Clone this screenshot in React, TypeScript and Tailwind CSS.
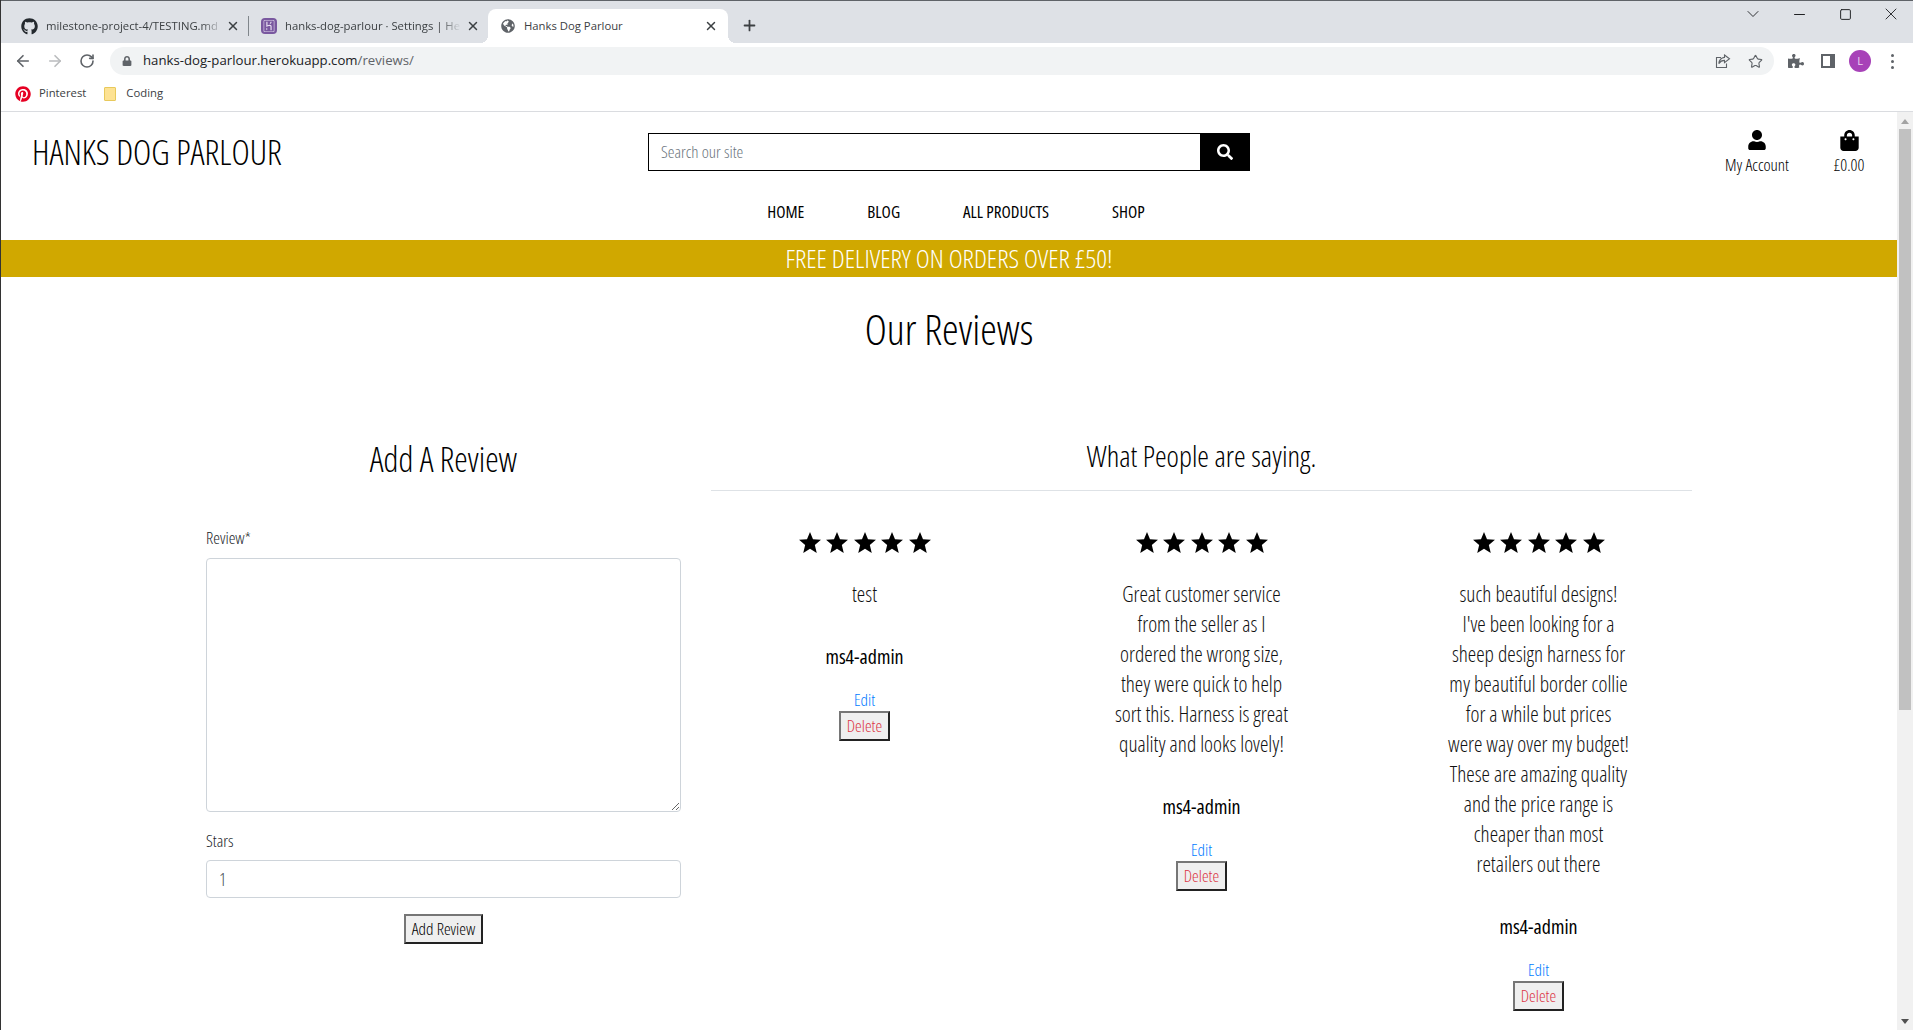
import { ArrowLeft, ArrowRight, ChevronDown, Minus, Plus, RotateCw, Square, Star, X } from 'lucide-react';
import { FaGithub, FaGlobeAmericas, FaLock, FaPinterest, FaPuzzlePiece, FaSearch, FaShoppingBag, FaUser } from 'react-icons/fa';
import { SiHeroku } from 'react-icons/si';

const reviews = [
  { id: 1, lines: ['test'] },
  {
    id: 2,
    lines: [
      'Great customer service',
      'from the seller as I',
      'ordered the wrong size,',
      'they were quick to help',
      'sort this. Harness is great',
      'quality and looks lovely!',
    ],
  },
  {
    id: 3,
    lines: [
      'such beautiful designs!',
      "I've been looking for a",
      'sheep design harness for',
      'my beautiful border collie',
      'for a while but prices',
      'were way over my budget!',
      'These are amazing quality',
      'and the price range is',
      'cheaper than most',
      'retailers out there',
    ],
  },
];

const navItems = ['HOME', 'BLOG', 'ALL PRODUCTS', 'SHOP'];

function BrowserChrome() {
  return (
    <div className="font-['Open_Sans',sans-serif] text-[#3c4043]">
      {/* Tab strip */}
      <div className="flex h-[43px] items-end border-t border-t-[#5f6368] bg-[#dee1e6] pl-2">
        <div className="flex h-[34px] w-[240px] items-center pl-3">
          <FaGithub className="mr-2 size-[17px] shrink-0 text-[#24292e]" />
          <span className="w-[177px] overflow-hidden whitespace-nowrap text-[11.3px] [mask-image:linear-gradient(to_right,black_88%,transparent)]">
            milestone-project-4/TESTING.md
          </span>
          <X className="ml-auto size-[14px] shrink-0" strokeWidth={2.5} />
          <span className="ml-2 h-5 w-px shrink-0 bg-[#80868b]" />
        </div>
        <div className="flex h-[34px] w-[239px] items-center pl-3 pr-2">
          <span className="mr-2 flex size-4 shrink-0 items-center justify-center rounded-sm bg-[#79589f]">
            <SiHeroku className="size-3 text-[#e6ddf0]" />
          </span>
          <span className="w-[176px] overflow-hidden whitespace-nowrap text-[11.3px] [mask-image:linear-gradient(to_right,black_88%,transparent)]">
            hanks-dog-parlour · Settings | Heroku
          </span>
          <X className="ml-auto size-[14px] shrink-0" strokeWidth={2.5} />
        </div>
        <div className="relative flex h-[34px] w-[240px] items-center rounded-t-lg bg-white pl-[13px] pr-2 before:absolute before:bottom-0 before:-left-2 before:size-2 before:bg-[radial-gradient(circle_at_0_0,transparent_8px,white_8px)] after:absolute after:bottom-0 after:-right-2 after:size-2 after:bg-[radial-gradient(circle_at_100%_0,transparent_8px,white_8px)]">
          <FaGlobeAmericas className="mr-[9px] size-[14px] shrink-0 text-[#5f6368]" />
          <span className="text-[11.3px]">Hanks Dog Parlour</span>
          <X className="ml-auto mr-[2px] size-[14px] shrink-0" strokeWidth={2.5} />
        </div>
        <Plus className="mb-[9px] ml-[13px] size-[17px] text-[#3c4043]" strokeWidth={2.5} />
        <div className="mb-[19px] ml-auto flex items-center self-end text-[#202124]">
          <span className="flex w-[46px] justify-center"><ChevronDown className="size-5" strokeWidth={1.1} /></span>
          <span className="flex w-[46px] justify-center"><Minus className="size-[17px]" strokeWidth={1.5} /></span>
          <span className="flex w-[46px] justify-center"><Square className="size-[13px]" strokeWidth={1.8} /></span>
          <span className="flex w-[45px] justify-center"><X className="size-5" strokeWidth={1.1} /></span>
        </div>
      </div>

      {/* Address bar */}
      <div className="flex h-[36px] items-center bg-white">
        <div className="flex w-[109px] items-center pl-[13px] text-[#5f6368]">
          <ArrowLeft className="size-[18px]" strokeWidth={2.2} />
          <ArrowRight className="ml-[14px] size-[18px] text-[#babcbe]" strokeWidth={2.2} />
          <RotateCw className="ml-[15px] size-4" strokeWidth={2.4} />
        </div>
        <div className="flex h-[28px] w-[1664px] items-center rounded-full bg-[#f1f3f4] pl-[12px] pr-[11px]">
          <FaLock className="size-[10px] text-[#5f6368]" />
          <span className="ml-[11px] text-[13.2px] text-[#202124]">
            hanks-dog-parlour.herokuapp.com<span className="text-[#5f6368]">/reviews/</span>
          </span>
          <svg viewBox="0 0 16 16" className="ml-auto size-4 text-[#5f6368]" fill="none" stroke="currentColor" strokeWidth="1.1">
            <path d="M6 4.5H1.5v10h10v-4" />
            <path d="M9.5 2l5 3.8-5 3.8V7.4C7 7.4 5.2 8.4 3.8 10.6c.4-3.6 2.4-5.8 5.7-6.2z" />
          </svg>
          <Star className="ml-[17px] size-[15px] text-[#5f6368]" strokeWidth={1.8} />
        </div>
        <div className="flex flex-1 items-center pl-[14px] text-[#5f6368]">
          <FaPuzzlePiece className="size-4" />
          <svg viewBox="0 0 14 14" className="ml-[17px] size-[14px]" fill="currentColor">
            <path d="M0 0h14v14H0zM2 2v10h7V2z" fillRule="evenodd" />
          </svg>
          <span className="ml-[14px] flex size-[22px] items-center justify-center rounded-full bg-[#a742b8] text-[11px] text-[#eed6f2]">L</span>
          <span className="ml-[20px] flex flex-col gap-[3px]">
            <span className="size-[3px] rounded-full bg-[#5f6368]" />
            <span className="size-[3px] rounded-full bg-[#5f6368]" />
            <span className="size-[3px] rounded-full bg-[#5f6368]" />
          </span>
        </div>
      </div>

      {/* Bookmarks */}
      <div className="flex h-[33px] items-center border-b border-b-[#dadce0] bg-white pb-[3px] pl-[14px] text-[11.3px]">
        <FaPinterest className="size-4 text-[#e60023]" />
        <span className="ml-2">Pinterest</span>
        <span className="ml-[18px] h-[14px] w-3 rounded-[1px] border border-[#e8c95c] bg-[#fde293]" />
        <span className="ml-[10px]">Coding</span>
      </div>
    </div>
  );
}

function Header() {
  return (
    <header className="bg-white">
      <div className="grid h-[81px] grid-cols-[1fr_602px_1fr]">
        <div className="pl-[31px] pt-[14px] text-[34.7px] leading-[52px] font-light text-black">HANKS DOG PARLOUR</div>
        <div className="mt-[21px] flex h-[38px] self-start">
          <div className="flex flex-1 items-center border border-r-0 border-black px-3 text-[17px] font-light text-[#6c757d]">Search our site</div>
          <div className="flex w-[50px] items-center justify-center bg-black">
            <FaSearch className="size-4 text-white" />
          </div>
        </div>
        <div className="flex justify-end pr-[2px] pt-[18px] text-[17px] font-light text-black">
          <div className="flex w-[92px] flex-col items-center">
            <FaUser className="size-[20px]" />
            <span className="mt-[2px] leading-[26px]">My Account</span>
          </div>
          <div className="flex w-[92px] flex-col items-center">
            <FaShoppingBag className="size-[21px]" />
            <span className="mt-[1px] leading-[26px]">£0.00</span>
          </div>
        </div>
      </div>
      <nav className="flex h-[47px] items-center justify-center gap-[63px] pb-[9px] pl-[14px] text-[17px] text-black">
        {navItems.map((item) => (
          <span key={item}>{item}</span>
        ))}
      </nav>
      <div className="flex h-[37px] items-center justify-center bg-[#d0a800] text-[26.5px] font-light text-white">
        FREE DELIVERY ON ORDERS OVER £50!
      </div>
    </header>
  );
}

function ReviewStar() {
  return (
    <svg viewBox="0 0 24 23" className="h-[21px] w-[22px]" fill="currentColor">
      <polygon points="12,0 15.3,8 24,8.6 17.3,14.2 19.4,23 12,18.3 4.6,23 6.7,14.2 0,8.6 8.7,8" />
    </svg>
  );
}

function ReviewCard({ lines }: { lines: string[] }) {
  return (
    <div className="flex flex-col items-center px-[15px]">
      <div className="mt-[41px] flex gap-[5.5px] text-black">
        {[...Array(5)].map((_, i) => (
          <ReviewStar key={i} />
        ))}
      </div>
      <p className="mt-[26px] text-center text-[21.3px] leading-[30px] font-light text-[#111]">
        {lines.map((line) => (
          <span key={line} className="block whitespace-nowrap">{line}</span>
        ))}
      </p>
      <div className="mt-[33px] text-[20px] leading-[30px] font-medium text-black">ms4-admin</div>
      <a className="mt-[16px] text-[17px] leading-[24px] font-light text-[#007bff]">Edit</a>
      <button className="-mt-[1px] flex h-[30px] w-[51px] items-center justify-center border-2 border-t-[#767676] border-l-[#767676] border-r-[#222] border-b-[#222] bg-[#efefef] text-[17px] font-light text-[#dc3545]">
        Delete
      </button>
    </div>
  );
}

export default function App() {
  return (
    <div className="h-screen overflow-hidden border-l border-l-[#333] bg-white font-['Open_Sans',sans-serif] font-stretch-[75%]">
      <div className="font-stretch-[100%]">
        <BrowserChrome />
      </div>
      <div className="relative flex h-[918px]">
        <main className="w-[1896px] shrink-0">
          <Header />
          <h1 className="mt-[27px] text-center text-[42px] leading-[50px] font-light text-black">Our Reviews</h1>
          <div className="mx-auto mt-[80px] grid w-[1516px] grid-cols-[505px_1011px]">
            <section className="px-[15px]">
              <h2 className="mt-[3px] text-center text-[34px] leading-[44px] font-light text-black">Add A Review</h2>
              <label className="mt-[45px] block text-[17px] leading-[24px] font-light text-[#212529]">Review*</label>
              <textarea className="mt-2 block h-[254px] w-full rounded border border-[#ced4da]" />
              <label className="mt-[17px] block text-[17px] leading-[24px] font-light text-[#212529]">Stars</label>
              <div className="mt-[7px] flex h-[38px] items-center rounded border border-[#ced4da] px-3 text-[18px] font-light text-[#495057]">1</div>
              <div className="mt-[16px] flex justify-center">
                <button className="flex h-[30px] w-[79px] items-center justify-center border-2 border-t-[#767676] border-l-[#767676] border-r-[#222] border-b-[#222] bg-[#efefef] text-[17px] font-light text-black">
                  Add Review
                </button>
              </div>
            </section>
            <section>
              <div className="mx-[15px] border-b border-b-[#dee2e6] pb-[12px] text-center text-[29.5px] leading-[44px] font-light text-black">
                What People are saying.
              </div>
              <div className="grid grid-cols-3">
                {reviews.map((r) => (
                  <ReviewCard key={r.id} lines={r.lines} />
                ))}
              </div>
            </section>
          </div>
        </main>
        {/* Scrollbar */}
        <div className="flex w-4 flex-col items-center bg-[#f1f1f1]">
          <span className="mt-[7px] border-x-[4px] border-b-[5px] border-x-transparent border-b-[#a3a3a3]" />
          <span className="mt-[5px] h-[581px] w-3 bg-[#c1c1c1]" />
          <span className="mt-auto mb-[6px] border-x-[4px] border-t-[5px] border-x-transparent border-t-[#505050]" />
        </div>
      </div>
    </div>
  );
}
